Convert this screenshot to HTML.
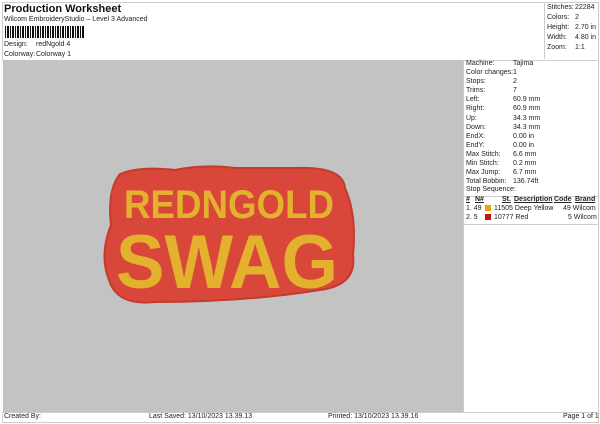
<!DOCTYPE html>
<html><head><style>
*{margin:0;padding:0;box-sizing:border-box}
body{width:600px;height:424px;background:#fff;font-family:"Liberation Sans",sans-serif;font-size:7px;color:#222;position:relative;overflow:hidden}
.a{position:absolute;white-space:nowrap}
</style></head><body>
<div class="a" style="left:2px;top:2px;width:597px;height:59px;border:1px solid #ccc"></div>
<div class="a" style="left:544px;top:2px;width:55px;height:57px;border-left:1px solid #ccc"></div>
<div class="a" style="left:4px;top:3px;font-size:11px;font-weight:bold;color:#111">Production Worksheet</div>
<div class="a" style="left:4px;top:16px">Wilcom EmbroideryStudio – Level 3 Advanced</div>
<div class="a" style="left:5px;top:26px;width:80px;height:12px;background:repeating-linear-gradient(90deg,#111 0 1px,#fff 1px 2px,#111 2px 4px,#fff 4px 5px)"></div>
<div class="a" style="left:4px;top:41px">Design:</div><div class="a" style="left:36px;top:41px">redNgold 4</div>
<div class="a" style="left:4px;top:51px">Colorway:</div><div class="a" style="left:36px;top:51px">Colorway 1</div>
<div class="a" style="left:547px;top:3px;line-height:10px">Stitches:<br>Colors:<br>Height:<br>Width:<br>Zoom:</div>
<div class="a" style="left:575px;top:3px;line-height:10px">22284<br>2<br>2.70 in<br>4.80 in<br>1:1</div>
<div class="a" style="left:3px;top:60px;width:460px;height:352px;background:#c3c3c3"></div>
<div class="a" style="left:463px;top:60px;width:136px;height:352px;border-left:1px solid #ccc;border-right:1px solid #ccc"></div>
<div class="a" style="left:463px;top:196px;width:136px;border-top:1px solid #ccc"></div>
<div class="a" style="left:463px;top:224px;width:136px;border-top:1px solid #ccc"></div>
<div class="a" style="left:466px;top:59px;line-height:9.1px">Machine:<br>Color changes:<br>Stops:<br>Trims:<br>Left:<br>Right:<br>Up:<br>Down:<br>EndX:<br>EndY:<br>Max Stitch:<br>Min Stitch:<br>Max Jump:<br>Total Bobbin:</div>
<div class="a" style="left:513px;top:59px;line-height:9.1px">Tajima<br>1<br>2<br>7<br>60.9 mm<br>60.9 mm<br>34.3 mm<br>34.3 mm<br>0.00 in<br>0.00 in<br>6.6 mm<br>0.2 mm<br>6.7 mm<br>136.74ft</div>
<div class="a" style="left:466px;top:186px">Stop Sequence:</div>
<div class="a" style="left:466px;top:196px;font-weight:bold;text-decoration:underline">#</div>
<div class="a" style="left:475px;top:196px;font-weight:bold;text-decoration:underline">N#</div>
<div class="a" style="left:502px;top:196px;font-weight:bold;text-decoration:underline">St.</div>
<div class="a" style="left:514px;top:196px;font-weight:bold;text-decoration:underline">Description</div>
<div class="a" style="left:554px;top:196px;font-weight:bold;text-decoration:underline">Code</div>
<div class="a" style="left:575px;top:196px;font-weight:bold;text-decoration:underline">Brand</div>
<div class="a" style="left:466px;top:205px">1. 49</div><div class="a" style="left:485px;top:205px;width:6px;height:6px;background:#f0a000"></div>
<div class="a" style="left:494px;top:205px">11505 Deep Yellow</div><div class="a" style="left:563px;top:205px">49 Wilcom</div>
<div class="a" style="left:466px;top:214px">2. 5</div><div class="a" style="left:485px;top:214px;width:6px;height:6px;background:#d01010"></div>
<div class="a" style="left:494px;top:214px">10777 Red</div><div class="a" style="left:568px;top:214px">5 Wilcom</div>
<div class="a" style="left:2px;top:412px;width:597px;height:11px;border:1px solid #ccc"></div>
<div class="a" style="left:4px;top:413px">Created By:</div>
<div class="a" style="left:149px;top:413px">Last Saved: 13/10/2023 13.39.13</div>
<div class="a" style="left:328px;top:413px">Printed: 13/10/2023 13.39.16</div>
<div class="a" style="left:563px;top:413px">Page 1 of 1</div>
<svg class="a" style="left:95px;top:160px" width="270" height="150" viewBox="0 0 270 150">
<path d="M25 14 Q45 6 80 10 Q110 4 140 8 L200 8 Q248 6 250 28 Q262 55 258 95 Q262 125 225 130 Q150 142 60 142 Q22 146 14 120 Q4 95 16 65 Q12 30 25 14Z" fill="#d9473a" stroke="#c43a2e" stroke-width="2"/>
<g font-family="Liberation Sans,sans-serif" font-weight="bold" fill="#e3b12e" stroke="#d9473a" stroke-width="3" paint-order="stroke" text-anchor="middle">
<text x="134" y="58" font-size="40" textLength="210" lengthAdjust="spacingAndGlyphs">REDNGOLD</text>
<text x="132" y="128" font-size="76" textLength="222" lengthAdjust="spacingAndGlyphs">SWAG</text>
</g>
</svg>
</body></html>
